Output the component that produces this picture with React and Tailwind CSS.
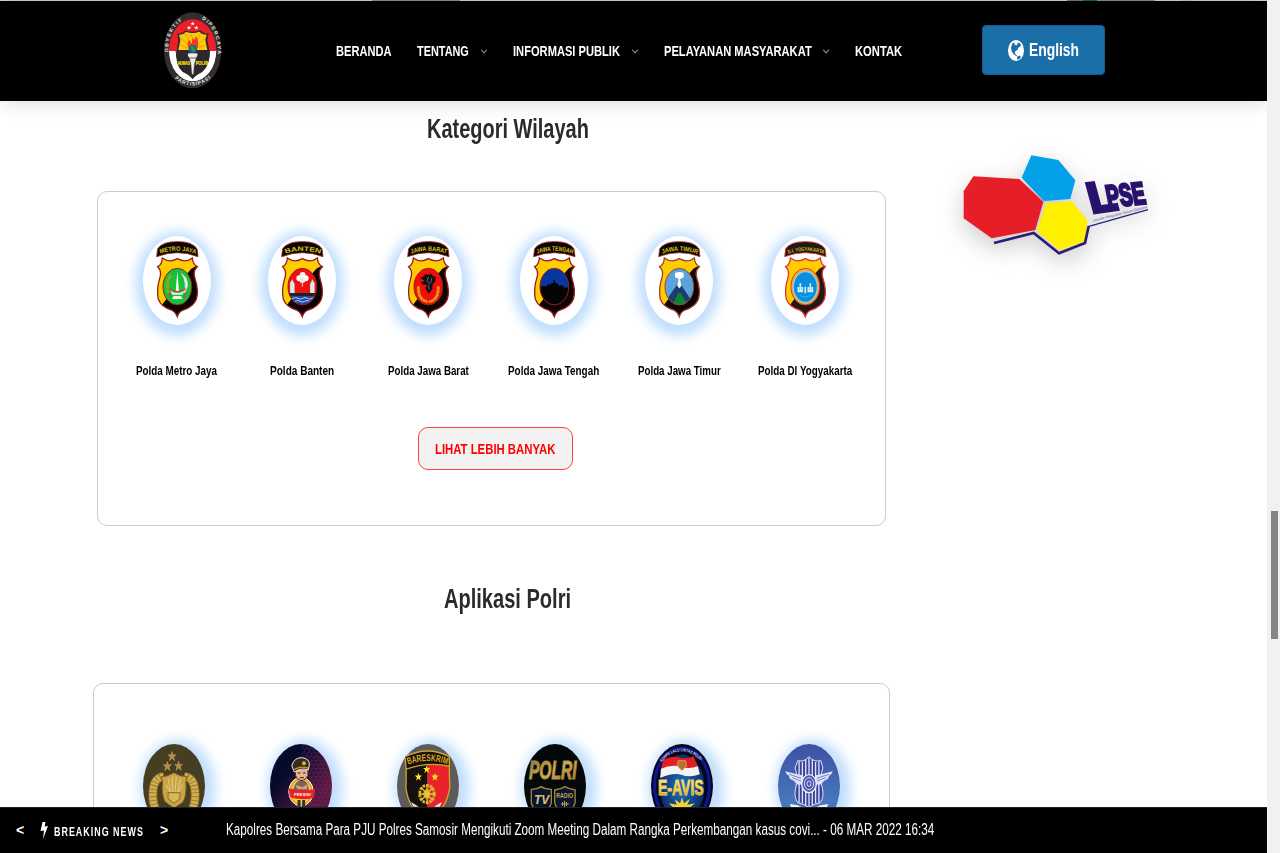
import React, { useLayoutEffect, useRef, useState } from 'react';
import { ChevronDown } from 'lucide-react';

// Condenses a line of text to the width of its box.
function Fit({ className, children }) {
  const box = useRef(null);
  const inner = useRef(null);
  const [scale, setScale] = useState(0.75);
  useLayoutEffect(() => {
    setScale(box.current.clientWidth / inner.current.offsetWidth);
  }, []);
  return (
    <span ref={box} className={`block shrink-0 whitespace-nowrap ${className}`}>
      <span ref={inner} className="inline-block origin-left" style={{ transform: `scaleX(${scale})` }}>
        {children}
      </span>
    </span>
  );
}

const SHIELD =
  'M58 66 Q80 82 103 68 Q128 82 148 66 Q150 86 163 92 Q148 106 156 128 Q168 162 160 190 Q150 214 120 222 Q107 228 103 242 Q98 228 86 222 Q55 214 46 190 Q40 160 50 128 Q58 106 44 92 Q57 86 58 66Z';

function Polda({ id, title, size = 19, rim = '#9b1c1c', black = '#0b0505', children }) {
  return (
    <svg viewBox="0 0 204 267" className="h-full w-full" preserveAspectRatio="none">
      <defs>
        <clipPath id={`s${id}`}><path d={SHIELD} /></clipPath>
        <clipPath id={`e${id}`}><ellipse cx="103" cy="152" rx="43" ry="55" /></clipPath>
        <path id={`t${id}`} d="M46 55 Q103 34 162 55" />
      </defs>
      <path d="M44 38 Q60 16 103 17 Q146 16 162 38 L165 62 Q103 38 41 62Z" fill={black} stroke={rim} strokeWidth="2.5" />
      <text fontFamily="Liberation Sans, sans-serif" fontWeight="700" fontSize={size} fill="#d8c80c">
        <textPath href={`#t${id}`} startOffset="6" textLength="108" lengthAdjust="spacingAndGlyphs">{title}</textPath>
      </text>
      <g clipPath={`url(#s${id})`}>
        <rect width="204" height="267" fill="#fc0" />
        <path d="M175 82 L145 98 L100 150 L56 208 L50 267 H204Z" fill={black} />
      </g>
      <path d={SHIELD} fill="none" stroke={rim} strokeWidth="4" />
      <g clipPath={`url(#e${id})`}>{children}</g>
      <ellipse cx="103" cy="152" rx="43" ry="55" fill="none" stroke={rim} strokeWidth="3" />
    </svg>
  );
}

const poldas = [
  {
    name: 'Polda Metro Jaya', w: 'w-[81px]',
    art: (
      <Polda id="mj" title="METRO JAYA">
        <rect width="204" height="267" fill="#18c137" />
        <path d="M77 170 Q66 140 84 118" stroke="#a9a51a" strokeWidth="9" strokeDasharray="5 2" fill="none" />
        <path d="M116 113 Q146 135 124 172 Q133 138 116 113Z" fill="#fff" stroke="#cde" strokeWidth="3" />
        <path d="M98 168 L103 106 L108 168Z" fill="#fff" />
        <path d="M78 158 Q103 176 128 158 M80 170 V185 M126 170 V185" stroke="#c7403a" strokeWidth="4" fill="none" />
        <path d="M82 164 Q103 178 124 164 L118 176 H88Z M92 180 H114 L119 189 H87Z" fill="#e8f4ea" />
      </Polda>
    ),
  },
  {
    name: 'Polda Banten', w: 'w-[64px]',
    art: (
      <Polda id="bt" title="BANTEN">
        <rect width="204" height="267" fill="#f01010" />
        <circle cx="94" cy="127" r="9" fill="#fff" /><circle cx="104" cy="117" r="9" fill="#f4f0f0" />
        <circle cx="113" cy="127" r="9" fill="#fff" /><circle cx="103" cy="132" r="9" fill="#eee" />
        <path d="M103 130 V152" stroke="#ddd" strokeWidth="3" />
        <path d="M66 172 V140 L73 130 L80 145 V172Z M126 172 V145 L133 130 L140 142 V172Z" fill="#e5e5e5" stroke="#888" />
        <rect x="55" y="171" width="96" height="9" fill="#222" />
        <rect x="55" y="180" width="96" height="40" fill="#2348a5" />
        <path d="M62 187 q7 5 14 0 t14 0 t14 0 t14 0 t14 0 t14 0 M68 196 q7 5 14 0 t14 0 t14 0 t14 0" stroke="#b7d2ff" strokeWidth="3" fill="none" />
      </Polda>
    ),
  },
  {
    name: 'Polda Jawa Barat', w: 'w-[81px]',
    art: (
      <Polda id="jb" title="JAWA BARAT">
        <rect width="204" height="267" fill="#f30d0d" />
        <path d="M78 126 L90 121 L94 114 L106 117 L110 112 L117 120 L126 124 L123 139 L116 143 L115 159 L104 173 L94 157 L99 147 L85 145 L80 139 L92 134Z" fill="#111" />
        <path d="M104 123 L99 134 L108 146 M114 125 L110 141 M103 148 L106 162" stroke="#999" strokeWidth="2" fill="none" />
        <path d="M73 151 Q72 193 101 197 M133 151 Q134 193 105 197" stroke="#e0a50c" strokeWidth="8" strokeDasharray="10 1" fill="none" />
      </Polda>
    ),
  },
  {
    name: 'Polda Jawa Tengah', w: 'w-[91px]',
    art: (
      <Polda id="jt" title="JAWA TENGAH">
        <rect width="204" height="267" fill="#0636a0" />
        <path d="M55 155 L68 150 L80 151 L85 144 L91 147 L96 140 L100 141 L103 127 L106 141 L112 142 L117 149 L125 147 L135 155 L150 153 V220 H55Z" fill="#050505" />
      </Polda>
    ),
  },
  {
    name: 'Polda Jawa Timur', w: 'w-[83px]',
    art: (
      <Polda id="jm" title="JAWA TIMUR" rim="#a04030">
        <rect width="204" height="267" fill="#5ba3dd" />
        <path d="M50 212 L96 146 H108 L152 212Z" fill="#1d3d6e" />
        <path d="M97 150 L101 128 L90 124 V111 Q103 105 116 111 V124 L105 130 L109 150 L103 157Z" fill="#fff" />
        <path d="M80 212 L98 174 Q103 165 109 174 L130 212Z" fill="#128335" />
      </Polda>
    ),
  },
  {
    name: 'Polda DI Yogyakarta', w: 'w-[94px]',
    art: (
      <Polda id="yk" title="D.I. YOGYAKARTA" size={16} rim="#dd3535" black="#211818">
        <rect width="204" height="267" fill="#f1ad35" />
        <ellipse cx="103" cy="153" rx="36" ry="46" fill="#078fdc" stroke="#8cc8e8" strokeWidth="4" />
        <path d="M88 142 V164 M82 153 V166 H94 V153 M118 142 V164 M112 153 V166 H124 V153 M103 152 V172" stroke="#d9edf7" strokeWidth="5" fill="none" />
        <path d="M86 178 Q103 188 120 178" stroke="#35b3f2" strokeWidth="3" fill="none" />
      </Polda>
    ),
  },
];

const STAR = 'M0 -12 L3 -4 L12 -4 L5 2 L8 11 L0 5 L-8 11 L-5 2 L-12 -4 L-3 -4Z';

function Oval({ children }) {
  return <svg viewBox="0 0 188 252" className="h-full w-full" preserveAspectRatio="none">{children}</svg>;
}

const sans = 'Liberation Sans, sans-serif';

const apps = [
  <Oval key="polri">
    <rect width="188" height="252" fill="#453e22" />
    {[[88, 37], [74, 67], [108, 66]].map(([x, y]) => (
      <path key={x} d={STAR} transform={`translate(${x} ${y}) scale(1 1.2)`} fill="#b78a3c" stroke="#e3c074" />
    ))}
    <path d="M62 98 Q28 100 30 160 Q32 200 60 220 M126 98 Q160 100 158 160 Q156 200 128 220" stroke="#8a6820" strokeWidth="27" fill="none" />
    <path d="M62 98 Q28 100 30 160 Q32 200 60 220 M126 98 Q160 100 158 160 Q156 200 128 220" stroke="#d0ac52" strokeWidth="22" strokeDasharray="9 2" fill="none" />
    <path d="M55 98 Q75 98 94 86 Q112 98 134 98 L130 112 Q133 160 120 175 Q104 186 94 192 Q82 185 66 172 Q56 150 59 112Z" fill="#c9a447" stroke="#7d5e1a" strokeWidth="3" />
    <path d="M76 104 L88 160 M88 98 L92 160 M101 98 L96 160 M114 104 L100 160 M70 122 L86 150 M120 122 L104 150" stroke="#e8cc7c" strokeWidth="3" />
    <path d="M76 146 H112 V164 L94 178 L76 164Z" fill="#d8b65c" stroke="#8a6820" strokeWidth="3" />
  </Oval>,
  <Oval key="presisi">
    <defs>
      <linearGradient id="navy" x1="0" x2="1" y1="0" y2="1"><stop offset=".3" stopColor="#060a2b" /><stop offset=".7" stopColor="#5b1741" /></linearGradient>
      <pattern id="hex" width="14" height="24" patternUnits="userSpaceOnUse"><path d="M7 0 L14 4 V12 L7 16 L0 12 V4Z M7 16 V24" fill="none" stroke="#8b3a78" strokeWidth="1.2" /></pattern>
    </defs>
    <rect width="188" height="252" fill="url(#navy)" />
    <rect x="95" width="93" height="252" fill="url(#hex)" opacity=".75" />
    <ellipse cx="94" cy="143" rx="37" ry="43" fill="#e9a312" stroke="#fff" strokeWidth="3" />
    <ellipse cx="94" cy="143" rx="30" ry="36" fill="#ffd21e" />
    <path d="M70 134 Q76 108 96 108 Q116 108 119 134 L115 160 H74Z" fill="#786553" stroke="#ddd" strokeWidth="2" />
    <path d="M77 122 L98 130 L114 120 L112 136 L84 136Z" fill="#d7a17d" />
    <path d="M77 76 H115 V94 Q108 110 94 110 Q80 106 77 94Z" fill="#e9b48d" stroke="#4b2a20" strokeWidth="3" />
    <path d="M84 87 h8 M100 87 h8 M91 101 h12" stroke="#351b15" strokeWidth="3" />
    <path d="M66 66 Q72 40 98 41 Q122 45 119 64 L116 78 Q96 70 74 84Z" fill="#3b2b1c" stroke="#eee" strokeWidth="3" />
    <path d="M74 76 Q98 64 116 73" stroke="#c89a35" strokeWidth="4" fill="none" /><circle cx="103" cy="58" r="6" fill="#e0b13a" />
    <path d="M57 133 Q95 142 137 135 L133 162 Q95 170 60 160Z" fill="#e1262b" />
    <text x="73" y="156" fontFamily={sans} fontStyle="italic" fontWeight="700" fontSize="12" fill="#fff" textLength="50">PRESISI</text>
    <path d="M88 168 V200 M102 168 V200" stroke="#333" strokeWidth="9" />
  </Oval>,
  <Oval key="bareskrim">
    <defs><clipPath id="bk"><path d="M24 38 Q94 4 159 38 Q158 80 160 130 Q150 200 93 230 Q35 200 27 130 Q30 80 24 38Z" /></clipPath><path id="bkt" d="M33 62 Q94 40 155 62" /></defs>
    <rect width="188" height="252" fill="#5d5b59" />
    <g clipPath="url(#bk)">
      <rect width="92" height="252" fill="#171011" /><rect x="92" width="96" height="252" fill="#e8242a" />
      <path d="M20 0 H166 V68 Q94 50 20 78Z" fill="#171011" stroke="#c9a827" strokeWidth="4" />
    </g>
    <path d="M24 38 Q94 4 159 38 Q158 80 160 130 Q150 200 93 230 Q35 200 27 130 Q30 80 24 38Z" fill="none" stroke="#c9a827" strokeWidth="4" />
    <text fontFamily={sans} fontWeight="700" fontSize="29" fill="#d9a91e"><textPath href="#bkt" textLength="122" lengthAdjust="spacingAndGlyphs">BARESKRIM</textPath></text>
    {[[90, 76], [65, 99], [115, 99]].map(([x, y]) => (
      <path key={x} d={STAR} transform={`translate(${x} ${y}) scale(.9 1.05)`} fill="#ffe71a" />
    ))}
    <ellipse cx="91" cy="150" rx="22" ry="26" fill="none" stroke="#d3b22b" strokeWidth="9" strokeDasharray="8 3" />
    <ellipse cx="91" cy="150" rx="12" ry="15" fill="#dda729" stroke="#7b4b15" strokeWidth="3" />
    <path d="M91 122 V178 M66 150 H116 M73 130 L109 170 M109 130 L73 170" stroke="#e7c838" strokeWidth="4" />
    <path d="M42 174 L66 188 H50Z M136 174 L112 188 H130Z" fill="#eee" />
  </Oval>,
  <Oval key="tv">
    <defs><linearGradient id="gold" x1="0" x2="1" y1="0" y2="1"><stop stopColor="#80602a" /><stop offset=".5" stopColor="#d7b155" /><stop offset="1" stopColor="#8a682c" /></linearGradient></defs>
    <rect width="188" height="252" fill="#030908" />
    <text transform="translate(15 106) scale(.63 1)" fontFamily={sans} fontWeight="700" fontStyle="italic" fontSize="75" fill="url(#gold)" stroke="#b69044" strokeWidth="3">POLRI</text>
    <path d="M22 136 Q40 136 52 128 Q64 136 83 136 V176 Q76 200 52 210 Q30 200 22 176Z M93 138 Q112 136 124 128 Q138 136 155 138 V176 Q148 200 124 210 Q100 200 93 176Z" fill="#071532" stroke="#a98637" strokeWidth="4" />
    <text transform="translate(30 180) scale(.88 1)" fontFamily={sans} fontWeight="700" fontStyle="italic" fontSize="41" fill="#e1c36d">TV</text>
    <text transform="translate(98 163) scale(.65 1)" fontFamily={sans} fontWeight="700" fontSize="24" fill="#c5a34b">RADIO</text>
    <path d="M112 180 H136 M117 174 V186 M123 170 V190 M129 174 V186" stroke="#c5a34b" strokeWidth="3" />
  </Oval>,
  <Oval key="eavis">
    <defs>
      <radialGradient id="sea"><stop offset=".2" stopColor="#1b65b4" /><stop offset="1" stopColor="#082b66" /></radialGradient>
      <path id="evt" d="M32 54 Q88 -10 156 54" />
      <linearGradient id="ev" x1="0" x2="0" y1="0" y2="1"><stop stopColor="#fff5ad" /><stop offset=".6" stopColor="#f5ce3c" /><stop offset="1" stopColor="#9a6b11" /></linearGradient>
    </defs>
    <rect width="188" height="252" fill="#05061c" />
    <ellipse cx="94" cy="126" rx="83" ry="114" fill="none" stroke="#0d1795" strokeWidth="9" />
    <ellipse cx="94" cy="128" rx="72" ry="100" fill="url(#sea)" stroke="#05061c" strokeWidth="8" />
    <text fontFamily={sans} fontWeight="700" fontSize="13" fill="#d4d9f5"><textPath href="#evt" textLength="136" lengthAdjust="spacingAndGlyphs">KORPS LALU LINTAS POLRI</textPath></text>
    <path d="M37 48 Q65 32 92 42 Q115 45 129 37 L142 68 Q115 76 92 68 Q62 61 30 75Z" fill="#e51e24" />
    <path d="M30 74 Q62 60 92 68 Q115 76 142 67 L148 91 Q116 102 92 92 Q64 86 28 102Z" fill="#f2f3f5" />
    <path d="M82 50 H105 L108 66 L94 80 L80 66Z" fill="#b7722c" stroke="#e3bd65" strokeWidth="2" />
    <text transform="translate(21 153) scale(.655 1)" fontFamily={sans} fontWeight="700" fontSize="65" fill="url(#ev)" stroke="#f2cf57" strokeWidth="2.5">E-AVIS</text>
    <path d="M94 160 L100 178 L118 164 L110 182 L134 178 L112 195 H72 L54 178 L78 182 L72 166 L88 178Z" fill="#f4d133" />
  </Oval>,
  <Oval key="korlantas">
    <defs><linearGradient id="kl" x1="0" x2="0" y1="0" y2="1"><stop stopColor="#3d51a3" /><stop offset=".7" stopColor="#4677bd" /></linearGradient></defs>
    <rect width="188" height="252" fill="url(#kl)" />
    <path d="M60 50 Q80 55 94 38 Q108 55 130 50 L136 72 Q125 100 135 135 Q140 160 128 176 Q108 180 94 190 Q80 180 60 176 Q48 160 53 135 Q62 100 52 72Z" fill="#38439b" stroke="#e3e6f7" strokeWidth="3" />
    <path d="M64 52 V176 M74 54 V178 M84 48 V184 M94 42 V188 M104 48 V184 M114 54 V178 M124 52 V176" stroke="#e3e6f7" strokeWidth="4" />
    <path d="M22 82 Q50 90 76 94 L74 120 Q60 128 48 110 Q32 105 34 96 Q24 92 22 82Z M166 82 Q138 90 112 94 L114 120 Q128 128 140 110 Q156 105 154 96 Q164 92 166 82Z" fill="#dde1f5" />
    <path d="M34 91 L70 103 M43 101 L70 111 M154 91 L118 103 M145 101 L118 111" stroke="#4758a8" strokeWidth="2" />
    <ellipse cx="94" cy="119" rx="22" ry="27" fill="#4558ab" stroke="#eef0fb" strokeWidth="4" />
    <ellipse cx="94" cy="119" rx="14" ry="18" fill="none" stroke="#dde1f5" strokeWidth="3" />
    <ellipse cx="94" cy="119" rx="6" ry="8" fill="none" stroke="#dde1f5" strokeWidth="3" />
    <path d="M36 180 L60 184 Q94 202 128 184 L152 180 L146 198 H42Z" fill="#edf0fb" />
  </Oval>,
];

function HumasLogo() {
  return (
    <svg viewBox="0 0 174 231" className="-mt-[2px] h-[77px] w-[58px]" preserveAspectRatio="none">
      <defs>
        <clipPath id="hl"><ellipse cx="86" cy="115" rx="71" ry="93" /></clipPath>
        <path id="lt1" d="M13 121 Q10 50 62 23" /><path id="lt2" d="M113 21 Q165 51 161 134" /><path id="lt3" d="M32 199 Q86 243 143 196" />
      </defs>
      <ellipse cx="86" cy="115" rx="86" ry="114" fill="#342d2d" />
      <g clipPath="url(#hl)"><rect width="174" height="117" fill="#ea1f28" /><rect y="117" width="174" height="114" fill="#fff" /></g>
      <path d="M40 65 Q55 66 64 55 Q85 64 108 55 Q120 66 134 65 L130 83 L136 117 Q140 158 115 180 Q94 190 86 202 Q76 189 56 180 Q32 158 38 117 L43 83Z" fill="#2e282b" />
      <path d="M45 68 Q60 68 66 59 Q86 67 106 59 Q114 68 128 68 L124 84 L130 114 H43 L49 84Z" fill="#fbc80d" />
      <path d="M46 72 L84 111 L62 62 M128 72 L90 111 L110 62 M46 98 L84 113 L127 98" fill="none" stroke="#e78a0a" strokeWidth="2" />
      <path d="M36 115 Q38 155 62 179 M137 115 Q136 155 112 179" stroke="#2b2526" strokeWidth="3" fill="none" />
      <path d="M86 58 Q79 75 91 83 Q98 72 94 68 Q108 88 99 114 Q86 126 74 110 Q67 94 76 83 Q81 88 81 97 Q89 80 82 71Z" fill="#ef3d17" />
      <circle cx="86" cy="111" r="12" fill="#11619a" /><path d="M82 101 Q96 105 91 112 L95 119 L84 117 L79 106Z" fill="#2e9a3a" />
      <path d="M72 124 H100 V132 L96 137 H76 L72 132Z M77 139 H96 L91 155 L88 187 H84 L81 155Z" fill="#eee" stroke="#888" />
      {[[86, 35], [75, 47], [97, 47]].map(([x, y]) => <path key={x} d={STAR} transform={`translate(${x} ${y}) scale(.55)`} fill="#fff" />)}
      <g fontFamily={sans} fontWeight="700">
        <g fontSize="17" fill="#f2e60c" stroke="#f2e60c" strokeWidth=".6">
          <text x="41" y="158" textLength="37" lengthAdjust="spacingAndGlyphs">HUMAS</text>
          <text x="95" y="158" textLength="37" lengthAdjust="spacingAndGlyphs">POLRI</text>
        </g>
        <g fontSize="15" fill="#e5e5e5">
          <text><textPath href="#lt1" textLength="108">OBYEKTIF</textPath></text>
          <text><textPath href="#lt2" textLength="122">DIPERCAYA</textPath></text>
          <text><textPath href="#lt3" textLength="118">PARTISIPASI</textPath></text>
        </g>
      </g>
    </svg>
  );
}

function Lpse() {
  return (
    <svg viewBox="0 0 720 450" className="mt-[29px] h-[150px] w-[240px] shrink-0 drop-shadow-[0_8px_12px_rgba(0,0,0,0.2)]">
      <path d="M100 139 L238 147 L310 215 L286 300 L155 325 L71 265 V184Z" fill="#e61e27" />
      <path d="M274 76 L355 90 L406 151 L391 207 L311 213 L245 143Z" fill="#04a0e8" />
      <path d="M318 219 L396 214 L442 270 L435 335 L358 361 L291 302Z" fill="#fff000" />
      <path d="M162 339 L281 309 L357 370 L435 339 L446 289" fill="none" stroke="#2b1c75" strokeWidth="8" />
      <path d="M444 290 L624 239" stroke="#2b1c75" strokeWidth="3.5" />
      <g fontFamily={sans} fontWeight="700" fill="#28126d" stroke="#28126d">
        <text transform="matrix(1 -.14 .27 1 455 249)" fontSize="126" strokeWidth="10" textLength="82" lengthAdjust="spacingAndGlyphs">L</text>
        <text transform="matrix(1 -.1 .2 1 505 232)" fontSize="92" strokeWidth="8" textLength="116" lengthAdjust="spacingAndGlyphs" dx="0">PSE</text>
      </g>
      <text transform="translate(460 275) rotate(-14)" fontFamily={sans} fontSize="11" fill="#544a91" textLength="168" lengthAdjust="spacingAndGlyphs">Layanan Pengadaan Secara Elektronik</text>
    </svg>
  );
}

function Globe() {
  return (
    <svg viewBox="0 0 48 62" className="h-[21px] w-[16px] shrink-0" preserveAspectRatio="none">
      <ellipse cx="24" cy="31" rx="24" ry="31" fill="#fff" />
      <path d="M13 10 L20 7 L19 13 L25 16 L29 12 L27 8 L35 9 L39 15 L36 20 L31 22 L29 29 L22 33 L20 38 L24 44 L28 46 L25 48 L17 42 L11 34 L9 22Z" fill="#1b6fa8" />
      <path d="M29 48 L35 46 L39 50 L34 56 L29 58 L27 53Z" fill="#1b6fa8" />
    </svg>
  );
}

const Chevron = () => <ChevronDown className="mt-px h-[11px] w-[10px] shrink-0 text-[#888]" strokeWidth={3} preserveAspectRatio="none" />;

export default function App() {
  return (
    <div className="flex h-[853px] w-[1280px] overflow-hidden bg-white font-['Liberation_Sans',sans-serif] text-black">
      <div className="flex w-[1267px] shrink-0 flex-col">
        <div className="flex h-px shrink-0 bg-[#ccd3ce]">
          <div className="ml-[372px] w-[88px] bg-[#8b908d]" />
          <div className="ml-[607px] w-[16px] bg-[#777]" />
          <div className="w-[14px] bg-[#0a6b3a]" />
          <div className="w-[58px] bg-[#888c8a]" />
          <div className="ml-[26px] w-[12px] bg-[#a8c8e8]" />
        </div>
        <header className="relative z-10 flex h-[100px] shrink-0 items-center bg-black pl-[164px] text-[15.5px] font-bold text-white shadow-[0_2px_18px_rgba(0,0,0,0.14)]">
          <HumasLogo />
          <nav className="ml-[113.5px] flex items-center">
            <Fit className="w-[56px]">BERANDA</Fit>
            <Fit className="mr-[10px] ml-[25.5px] w-[52px]">TENTANG</Fit>
            <Chevron />
            <Fit className="mr-[10px] ml-[24px] w-[107px]">INFORMASI PUBLIK</Fit>
            <Chevron />
            <Fit className="mr-[9.5px] ml-[23.5px] w-[148px]">PELAYANAN MASYARAKAT</Fit>
            <Chevron />
            <Fit className="ml-[23.5px] w-[47px]">KONTAK</Fit>
          </nav>
          <button className="-mt-[2px] ml-[80.5px] flex h-[50px] w-[123px] items-center justify-center gap-[5px] rounded-[4px] border border-[#165d8c] bg-[#1b6fa8] text-[18px] font-bold">
            <Globe />
            <Fit className="w-[50px]">English</Fit>
          </button>
        </header>

        <main className="flex min-h-0 flex-1 overflow-hidden">
          <div className="ml-[93px] flex w-[797px] shrink-0 flex-col items-center">
            <h2 className="mt-[9px] flex h-[38px] items-center pl-[32px] text-[27px] font-bold text-[#2b2b2b]">
              <Fit className="w-[162px]">Kategori Wilayah</Fit>
            </h2>
            <section className="mt-[43px] flex h-[335px] w-[789px] shrink-0 flex-col items-center rounded-[10px] border border-[#ccc] pt-[44px]">
              <div className="-ml-px grid w-[754px] grid-cols-6">
                {poldas.map((p) => (
                  <div key={p.name} className="flex flex-col items-center">
                    <div className="h-[89px] w-[68px] overflow-hidden rounded-[50%] bg-white shadow-[0_3px_12px_8px_#c2dffe]">{p.art}</div>
                    <div className="mt-[37px] text-[13.5px] leading-[18px] font-bold"><Fit className={p.w}>{p.name}</Fit></div>
                  </div>
                ))}
              </div>
              <button className="mt-[47px] ml-[8px] flex h-[43px] w-[155px] items-center justify-center rounded-[10px] border border-[#ff4040] bg-[#f2f2f2] pr-[2px] text-[15.5px] font-bold text-[#f00]">
                <Fit className="w-[120px]">LIHAT LEBIH BANYAK</Fit>
              </button>
            </section>
            <h2 className="mt-[54px] flex h-[38px] shrink-0 items-center pl-[32px] text-[27px] font-bold text-[#2b2b2b]">
              <Fit className="w-[127px]">Aplikasi Polri</Fit>
            </h2>
            <section className="mt-[65px] flex h-[340px] w-[797px] shrink-0 flex-col items-center rounded-[10px] border border-[#ccc] pt-[60px]">
              <div className="-ml-px grid w-[762px] grid-cols-6">
                {apps.map((art) => (
                  <div key={art.key} className="flex justify-center">
                    <div className="h-[84px] w-[62px] overflow-hidden rounded-[50%] shadow-[4px_2px_12px_7px_#c2dffe]">{art}</div>
                  </div>
                ))}
              </div>
            </section>
          </div>
          <aside className="ml-[50px]"><Lpse /></aside>
        </main>

        <footer className="relative z-10 flex h-[46px] shrink-0 items-center border-t border-[#222] bg-black pl-[16px] text-white">
          <Fit className="w-[8px] text-[14px] font-bold">&lt;</Fit>
          <svg viewBox="0 0 8 17" className="mr-[6px] ml-[16px] h-[17px] w-[8px]"><path d="M2.5 0 H5.5 L4.7 4.5 L8 4 L3 17 L4 8.5 L.5 9Z" fill="#fff" /></svg>
          <Fit className="mt-[3px] w-[90px] text-[12.5px] font-bold tracking-[1.4px]">BREAKING NEWS</Fit>
          <Fit className="ml-[16px] w-[8px] text-[14px] font-bold">&gt;</Fit>
          <Fit className="-mt-[2px] ml-[58px] w-[708px] text-[16px]">Kapolres Bersama Para PJU Polres Samosir Mengikuti Zoom Meeting Dalam Rangka Perkembangan kasus covi... - 06 MAR 2022 16:34</Fit>
        </footer>
      </div>
      <div className="relative z-20 flex w-[13px] justify-center bg-[#f1f1f1] pt-[511px]">
        <div className="ml-[2px] h-[128px] w-[7px] bg-[#858585]" />
      </div>
    </div>
  );
}
